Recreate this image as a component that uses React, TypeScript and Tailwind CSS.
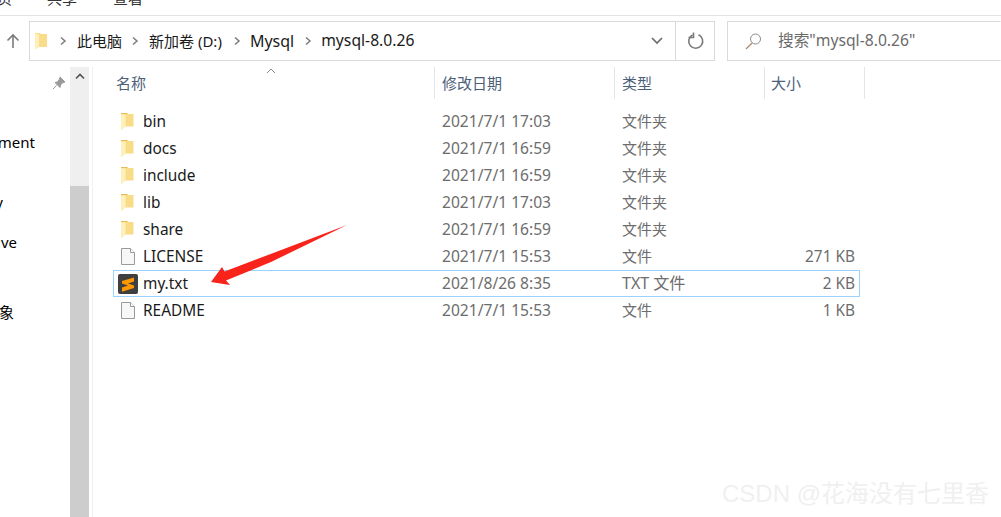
const font = '[font-family:"Noto_Sans","Noto_Sans_CJK_SC",sans-serif]';

type Row = { name: string; date: string; type: string; size?: string; icon: "folder" | "file" | "sublime"; selected?: boolean };

const rows: Row[] = [
  { name: "bin", date: "2021/7/1 17:03", type: "文件夹", icon: "folder" },
  { name: "docs", date: "2021/7/1 16:59", type: "文件夹", icon: "folder" },
  { name: "include", date: "2021/7/1 16:59", type: "文件夹", icon: "folder" },
  { name: "lib", date: "2021/7/1 17:03", type: "文件夹", icon: "folder" },
  { name: "share", date: "2021/7/1 16:59", type: "文件夹", icon: "folder" },
  { name: "LICENSE", date: "2021/7/1 15:53", type: "文件", size: "271 KB", icon: "file" },
  { name: "my.txt", date: "2021/8/26 8:35", type: "TXT 文件", size: "2 KB", icon: "sublime", selected: true },
  { name: "README", date: "2021/7/1 15:53", type: "文件", size: "1 KB", icon: "file" },
];

function Folder() {
  return (
    <svg width="16" height="19" viewBox="0 0 16 19" className="shrink-0">
      <path d="M1 1h6l1 1h5.500v12.500H5l-3 3H1z" fill="#f9dc87" />
      <path d="M1 2.500h4.500v12l-3.500 3H1z" fill="#fdf0bd" />
      <path d="M1 1.500h6.500" stroke="#e3bd5a" fill="none" />
    </svg>
  );
}

function FileIcon() {
  return (
    <svg width="16" height="19" viewBox="0 0 16 19" className="shrink-0">
      <path d="M1.500 1.500h9l4 4v12h-13z" fill="#f7f7f7" stroke="#9a9a9a" />
      <path d="M10.500 1.500v4h4" fill="#fff" stroke="#9a9a9a" />
    </svg>
  );
}

function Sublime() {
  return (
    <svg width="20" height="20" viewBox="0 0 20 20" className="shrink-0">
      <rect width="20" height="20" rx="2" fill="#3f3f3f" />
      <path d="M16 3.500v4.100L10 9.500l6 2v2.600L4 17.700v-4.200l6-2-6-2V7.100z" fill="#ff9800" />
    </svg>
  );
}

function Chevron({ className }: { className: string }) {
  return (
    <svg width="8" height="10" viewBox="0 0 8 10" className={className}>
      <path d="M2 1.500L6 5 2 8.500" fill="none" stroke="#7a7a7a" strokeWidth="1.5" />
    </svg>
  );
}

function SideLabel({ text, width, top }: { text: string; width: string; top: string }) {
  return (
    <div className={`flex shrink-0 justify-end overflow-hidden whitespace-nowrap text-[15px] leading-[20px] text-black ${width} ${top}`}>
      <span className="shrink-0">{text}</span>
    </div>
  );
}

export default function App() {
  return (
    <div className={`relative flex h-[517px] w-[1001px] flex-col overflow-hidden bg-white ${font}`}>
      {/* ribbon tabs, cut off by the top of the capture */}
      <div className="flex h-[16px] shrink-0 items-end overflow-hidden border-b border-[#e2e2e2] pb-[7px] text-[15px] leading-[20px] text-[#333]">
        <span className="ml-[-3px] w-[50px]">页</span>
        <span className="w-[66px]">共享</span>
        <span>查看</span>
      </div>

      {/* address bar */}
      <div className="mt-[5px] flex h-[40px] shrink-0 items-stretch">
        <div className="flex w-[29px] items-center justify-center pr-[3px]">
          <svg width="14" height="16" viewBox="0 0 14 16">
            <path d="M7 15V2M1.500 7.500L7 2l5.500 5.500" fill="none" stroke="#7b7b7b" strokeWidth="1.6" />
          </svg>
        </div>
        <div className="flex w-[686px] items-center border border-[#d9d9d9] pl-[5px] text-[15px] text-[#1a1a1a]">
          <svg width="13" height="17" viewBox="0 0 13 17" className="shrink-0">
            <path d="M0 0h5l1 1h6v13H4l-3 2H0z" fill="#f9dc87" />
            <path d="M0 1h4v13L1 16H0z" fill="#fdf0bd" />
          </svg>
          <Chevron className="ml-[11px] shrink-0" />
          <span className="ml-[10px]">此电脑</span>
          <Chevron className="ml-[9px] shrink-0" />
          <span className="ml-[10px]">新加卷 (D:)</span>
          <Chevron className="ml-[11px] shrink-0" />
          <span className="ml-[9px] text-[16px]">Mysql</span>
          <Chevron className="ml-[10px] shrink-0" />
          <span className="ml-[9px] text-[15.700px]">mysql-8.0.26</span>
          <div className="ml-auto flex h-full items-center">
            <svg width="14" height="10" viewBox="0 0 14 10" className="mr-[11px]">
              <path d="M2 2l5 5 5-5" fill="none" stroke="#6d6d6d" strokeWidth="1.7" />
            </svg>
            <div className="flex h-full w-[39px] items-center justify-center border-l border-[#d9d9d9] pl-[2px]">
              <svg width="18" height="18" viewBox="0 0 18 18">
                <path d="M11.500 2.800A7 7 0 1 1 5.500 3" fill="none" stroke="#7a7a7a" strokeWidth="1.6" />
                <path d="M6.500 0.500v5h-5" fill="none" stroke="#7a7a7a" strokeWidth="1.6" />
              </svg>
            </div>
          </div>
        </div>
        <div className="ml-[12px] flex flex-1 items-center border border-y-[#d9d9d9] border-l-[#d9d9d9] border-r-transparent pl-[17px] text-[15.700px] text-[#6b6b6b]">
          <svg width="17" height="17" viewBox="0 0 17 17" className="shrink-0">
            <circle cx="10.500" cy="6" r="5" fill="none" stroke="#8a8a8a" />
            <path d="M7 10l-6 6" stroke="#b08a66" strokeWidth="1.2" />
          </svg>
          <span className="ml-[16px]">搜索"mysql-8.0.26"</span>
        </div>
      </div>

      <div className="mt-[6px] flex min-h-0 flex-1">
        {/* navigation pane */}
        <div className="relative flex w-[70px] shrink-0 flex-col">
          <svg width="14" height="14" viewBox="0 0 14 14" className="absolute left-[52px] top-[9px]">
            <path d="M8 1l5 5-2 .5-2.500 2.500-.5 2.500-5-5L5.500 6 7.500 3z M4.500 9.500L1 13" fill="#9a9a9a" stroke="#9a9a9a" />
          </svg>
          <SideLabel text="Development" width="w-[35px]" top="mt-[65px]" />
          <SideLabel text="y" width="w-[3px]" top="mt-[40px]" />
          <SideLabel text="Drive" width="w-[17px]" top="mt-[20px]" />
          <SideLabel text="对象" width="w-[14px]" top="mt-[50px]" />
          <SideLabel text="此" width="w-[15px]" top="mt-[192px]" />
        </div>

        {/* scrollbar */}
        <div className="flex w-[19px] shrink-0 flex-col bg-[#efefef]">
          <div className="flex h-[19px] items-center justify-center">
            <svg width="10" height="7" viewBox="0 0 10 7">
              <path d="M1 5.500L5 1.500l4 4" fill="none" stroke="#505050" strokeWidth="1.6" />
            </svg>
          </div>
          <div className="mt-[100px] flex-1 bg-[#cdcdcd]" />
        </div>
        <div className="ml-[3px] w-px shrink-0 bg-[#f0f0f0]" />

        {/* file list */}
        <div className="relative flex-1 pl-[20px]">
          <svg width="10" height="6" viewBox="0 0 10 6" className="absolute left-[173px] top-[1px]">
            <path d="M1 5l4-4 4 4" fill="none" stroke="#8a8a8a" />
          </svg>
          <div className="grid h-[32px] grid-cols-[322px_180px_150px_100px] text-[15px] leading-[32px] text-[#4c607a]">
            <div className="border-r border-[#e5e5e5] pl-[3px]">名称</div>
            <div className="border-r border-[#e5e5e5] pl-[7px]">修改日期</div>
            <div className="border-r border-[#e5e5e5] pl-[7px]">类型</div>
            <div className="border-r border-[#e5e5e5] pl-[6px]">大小</div>
          </div>
          <div className="mt-[9px] flex w-[747px] flex-col">
            {rows.map((r) => (
              <div
                key={r.name}
                className={`grid h-[27px] grid-cols-[322px_180px_142px_1fr] items-center border text-[15.400px] leading-[25px] ${
                  r.selected ? "border-[#99d1ff]" : "border-transparent"
                }`}
              >
                <div className={`flex items-center text-[#1a1a1a] ${r.icon === "sublime" ? "pl-[4px] gap-[5px]" : "pl-[6px] gap-[7px]"}`}>
                  {r.icon === "folder" && <Folder />}
                  {r.icon === "file" && <FileIcon />}
                  {r.icon === "sublime" && <Sublime />}
                  <span>{r.name}</span>
                </div>
                <div className="pl-[6px] text-[15.600px] text-[#6d6d6d]">{r.date}</div>
                <div className={`pl-[6px] text-[#6d6d6d] ${r.selected ? "text-[16px]" : "text-[15px]"}`}>{r.type}</div>
                <div className="pr-[4px] text-right text-[#6d6d6d]">{r.size}</div>
              </div>
            ))}
          </div>
        </div>
      </div>

      {/* red annotation arrow */}
      <svg width="140" height="62" viewBox="0 0 140 62" className="absolute left-[209px] top-[224px]">
        <path d="M2 58L13 43l2.500 4.500L138 1 62 38 17 56.500l4 4.500z" fill="#f8231a" />
      </svg>

      {/* watermark */}
      <div className="absolute left-[722px] top-[477px] text-[24px] leading-[34px] text-[#f0f0f0] [font-family:'Liberation_Sans','Noto_Sans_CJK_SC',sans-serif]">
        CSDN @花海没有七里香
      </div>
    </div>
  );
}
